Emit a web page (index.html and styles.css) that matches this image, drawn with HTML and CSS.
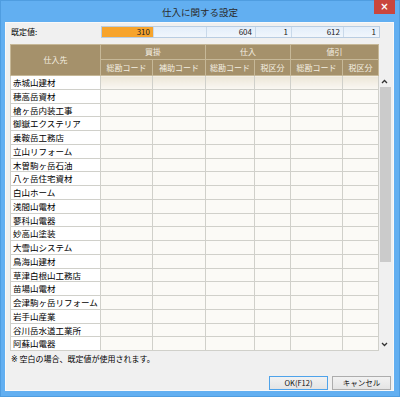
FILE: index.html
```html
<!DOCTYPE html>
<html lang="ja">
<head>
  <meta charset="UTF-8">
  <title>仕入に関する設定</title>
  <link rel="stylesheet" href="styles.css">
</head>
<body>
  <div class="window">
    <div class="titlebar">
      <span></span>
      <span class="title">仕入に関する設定</span>
      <button class="close">×</button>
    </div>
    <div class="client">
      <div class="defaults">
        <span class="defaults-label">既定値:</span>
        <div class="defaults-fields">
          <span class="field field-active">310</span>
          <span class="field"></span>
          <span class="field">604</span>
          <span class="field">1</span>
          <span class="field">612</span>
          <span class="field">1</span>
        </div>
      </div>

      <div class="grid-wrap">
        <table class="grid">
          <colgroup>
            <col class="c-name">
            <col class="c-code">
            <col class="c-sub">
            <col class="c-code2">
            <col class="c-tax">
            <col class="c-code">
            <col class="c-tax">
          </colgroup>
          <thead>
            <tr class="head1">
              <th rowspan="2">仕入先</th>
              <th colspan="2">買掛</th>
              <th colspan="2">仕入</th>
              <th colspan="2">値引</th>
            </tr>
            <tr class="head2">
              <th>総勘コード</th>
              <th>補助コード</th>
              <th>総勘コード</th>
              <th>税区分</th>
              <th>総勘コード</th>
              <th>税区分</th>
            </tr>
          </thead>
          <tbody id="rows"></tbody>
        </table>
        <div class="scrollbar">
          <div class="sb-arrow">
            <svg width="7" height="5" viewBox="0 0 7 5"><polyline points="1,4 3.5,1.5 6,4" fill="none" stroke="#333" stroke-width="1.3"/></svg>
          </div>
          <div class="sb-track"><div class="sb-thumb"></div></div>
          <div class="sb-arrow">
            <svg width="7" height="5" viewBox="0 0 7 5"><polyline points="1,1 3.5,3.5 6,1" fill="none" stroke="#333" stroke-width="1.3"/></svg>
          </div>
        </div>
      </div>

      <p class="note"><span class="mark">※</span> 空白の場合、既定値が使用されます。</p>

      <div class="buttons">
        <button class="btn btn-default">OK(F12)</button>
        <button class="btn">キャンセル</button>
      </div>
    </div>
  </div>

  <script>
    const suppliers = [
      "赤城山建材", "穂高岳資材", "槍ヶ岳内装工事", "御嶽エクステリア", "乗鞍岳工務店",
      "立山リフォーム", "木曽駒ヶ岳石油", "八ヶ岳住宅資材", "白山ホーム", "浅間山電材",
      "蓼科山電器", "妙高山塗装", "大雪山システム", "鳥海山建材", "草津白根山工務店",
      "苗場山電材", "会津駒ヶ岳リフォーム", "岩手山産業", "谷川岳水道工業所", "阿蘇山電器"
    ];

    const tbody = document.getElementById('rows');
    suppliers.forEach(name => {
      const tr = document.createElement('tr');
      tr.innerHTML = `<td class="name">${name}</td>` + '<td></td>'.repeat(6);
      tbody.appendChild(tr);
    });
  </script>
</body>
</html>
```

FILE: styles.css
```css
* {
  box-sizing: border-box;
}
body {
  margin: 0;
  font-family: 'Noto Sans CJK JP', 'Noto Sans', sans-serif;
  color: #111;
}
.window {
  width: 400px;
  height: 397px;
  background: #62aff1;
  border: 1px solid #4f9de0;
  display: flex;
  flex-direction: column;
}
.titlebar {
  height: 21px;
  display: grid;
  grid-template-columns: 1fr auto 1fr;
  align-items: center;
}
.title {
  font-size: 9.5px;
  color: #2a2a2a;
}
.close {
  justify-self: end;
  align-self: start;
  width: 21px;
  height: 14px;
  margin: -1px 4px 0 0;
  padding: 0;
  border: none;
  background: #c9463d;
  color: #fff;
  font-family: 'DejaVu Sans', sans-serif;
  font-size: 10px;
  font-weight: bold;
  line-height: 14px;
}
.client {
  flex: 1;
  margin: 0 5px 5px 4px;
  background: #f0f0f0;
  border: 1px solid #f9f9f9;
  padding: 3px 0 0 4px;
}
.defaults {
  display: flex;
  height: 12px;
}
.defaults-label {
  width: 91px;
  padding-left: 1px;
  font-size: 8px;
  line-height: 12px;
  color: #000;
}
.defaults-fields {
  display: grid;
  grid-template-columns: 51px 53px 49px 36px 52px 36px;
  border: 1px solid #b9cde2;
  background: linear-gradient(#e3eefa, #f1f6fc);
}
.field {
  border-left: 1px solid #c9d9ea;
  font-size: 8px;
  line-height: 10px;
  text-align: right;
  padding-right: 3px;
  color: #222;
}
.field:first-child {
  border-left: none;
}
.field-active {
  background: #f7a42c;
}
.grid-wrap {
  display: flex;
  align-items: flex-start;
  margin-top: 6px;
}
.grid {
  width: 368px;
  table-layout: fixed;
  border-collapse: collapse;
  font-size: 8.5px;
}
.c-name { width: 90px; }
.c-code { width: 52px; }
.c-sub { width: 53px; }
.c-code2 { width: 49px; }
.c-tax { width: 36px; }
.grid th {
  background: #a5916b;
  color: #f4efe2;
  font-weight: normal;
  font-size: 8px;
  border: 1px solid #c6b898;
  padding: 0;
  line-height: 1;
}
.head1 th {
  height: 15px;
}
.head2 th {
  height: 16px;
}
.grid td {
  height: 13.75px;
  padding: 0 3px;
  border: 1px solid #d0d0ca;
  background: #fbfaf6;
  white-space: nowrap;
  overflow: hidden;
  line-height: 1;
  color: #000;
}
.grid td.name {
  background: #fff;
  padding-left: 2px;
}
.grid tbody tr:first-child td:not(.name) {
  background: linear-gradient(#ece6d8, #faf8f3);
}
.scrollbar {
  width: 15px;
  height: 275px;
  margin-top: 31px;
  display: flex;
  flex-direction: column;
}
.sb-arrow {
  height: 12px;
  display: flex;
  align-items: center;
  padding-left: 2px;
}
.sb-track {
  flex: 1;
  padding-left: 1px;
}
.sb-thumb {
  width: 11px;
  height: 175px;
  background: #cbcbcb;
}
.note {
  margin: 2px 0 0 1px;
  font-size: 8px;
  line-height: 11px;
  color: #000;
}
.mark {
  font-family: 'DejaVu Sans', sans-serif;
  color: #000;
}
.buttons {
  display: flex;
  justify-content: flex-end;
  gap: 4px;
  margin-top: 11px;
  padding-right: 2px;
}
.btn {
  width: 59px;
  height: 14px;
  padding: 0;
  border: 1px solid #adadad;
  background: linear-gradient(#f2f2f2, #e4e4e4);
  font-family: 'Noto Sans CJK JP', sans-serif;
  font-size: 7.5px;
  line-height: 12px;
  color: #111;
}
.btn-default {
  border-color: #4fa3ea;
}
```
